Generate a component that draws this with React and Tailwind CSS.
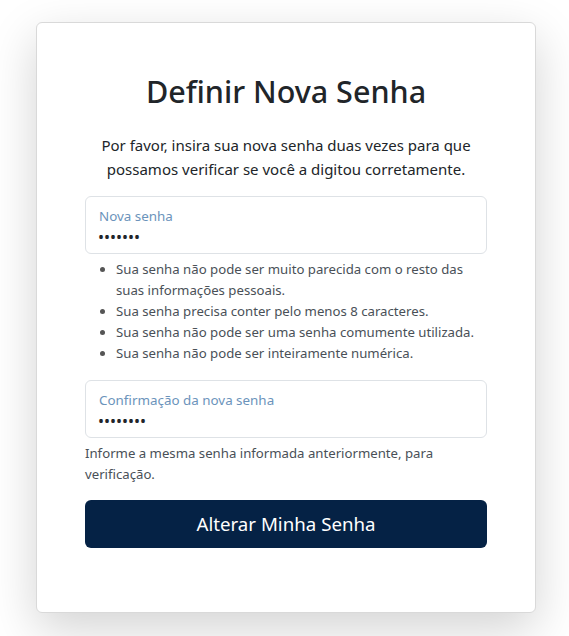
import { useState } from 'react'

const rules = [
  'Sua senha não pode ser muito parecida com o resto das suas informações pessoais.',
  'Sua senha precisa conter pelo menos 8 caracteres.',
  'Sua senha não pode ser uma senha comumente utilizada.',
  'Sua senha não pode ser inteiramente numérica.',
]

function FloatingInput({ label, value, onChange }) {
  return (
    <div className="relative h-[58px] rounded-md border border-[#dee2e6] bg-white">
      <label className="absolute left-[13px] top-[9px] text-[13.4px] text-[#6b93bb]">{label}</label>
      <input
        type="password"
        value={value}
        onChange={(e) => onChange(e.target.value)}
        className="w-full h-full pt-[28px] pb-[4px] px-[12px] bg-transparent outline-none text-[16px] text-[#212529] rounded-md"
      />
    </div>
  )
}

export default function App() {
  const [pass1, setPass1] = useState('1234567')
  const [pass2, setPass2] = useState('12345678')

  return (
    <div className="min-h-screen bg-white pt-[22px] px-[36px]" style={{ fontFamily: '"Noto Sans", "Open Sans", sans-serif' }}>
      <div className="w-[500px] h-[591px] bg-white rounded-md border border-[#d9d9d9] shadow-[0_1rem_3rem_rgba(0,0,0,0.175)] px-[48px] pt-[50px]">
        <h1 className="text-center text-[30.5px] font-medium text-[#212529] leading-[1.2]">Definir Nova Senha</h1>

        <p className="text-center text-[15px] leading-6 text-[#212529] mt-[23px] mb-[15px]">
          Por favor, insira sua nova senha duas vezes para que<br />possamos verificar se você a digitou corretamente.
        </p>

        <FloatingInput label="Nova senha" value={pass1} onChange={setPass1} />

        <ul className="list-disc pl-[31px] mt-[5px] text-[13.2px] leading-[21px] text-[#495057] marker:text-[#555]">
          {rules.map((r, i) => (
            <li key={i}>{r}</li>
          ))}
        </ul>

        <div className="mt-[16px]">
          <FloatingInput label="Confirmação da nova senha" value={pass2} onChange={setPass2} />
        </div>

        <p className="mt-[5px] text-[13.2px] leading-[21px] text-[#495057]">
          Informe a mesma senha informada anteriormente, para verificação.
        </p>

        <button className="mt-[15px] w-full h-[48px] rounded-md bg-[#052245] text-white text-[18.7px]">
          Alterar Minha Senha
        </button>
      </div>
    </div>
  )
}
